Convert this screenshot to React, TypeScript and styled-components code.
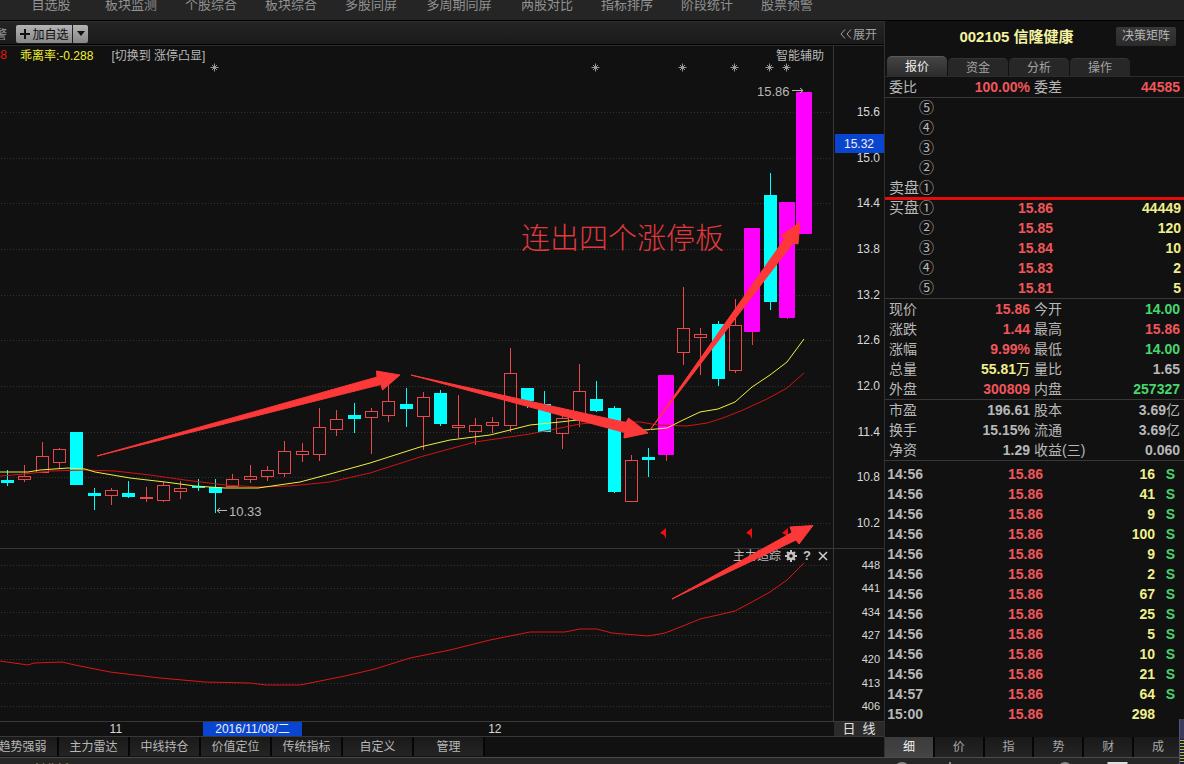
import React from "react";
import styled, { createGlobalStyle } from "styled-components";

const RED = "#f0565a";
const YELLOW = "#f0f08a";
const GREEN = "#46d66e";
const GREY = "#b8b8b8";
const LINE = "#383838";

const GlobalStyle = createGlobalStyle`
  *, *::before { box-sizing: border-box; }
  body {
    margin: 0;
    background: #111111;
    color: ${GREY};
    font-family: "Liberation Sans", "Noto Sans CJK SC", sans-serif;
    font-size: 12px;
  }
  button {
    font: inherit;
    color: inherit;
    margin: 0;
    padding: 0;
    border: 0;
    background: none;
    cursor: pointer;
  }
`;

const Page = styled.div`
  height: 100vh;
  overflow: hidden;
  display: flex;
  flex-direction: column;
`;

const TopNav = styled.nav`
  height: 21px;
  flex: none;
  overflow: hidden;
  display: flex;
  padding-left: 11px;
  background: #252525;
  border-bottom: 1px solid #000;
`;

const TopLink = styled.a<{ $wide?: boolean }>`
  flex: none;
  width: ${(p) => (p.$wide ? 96 : 80)}px;
  height: 20px;
  margin-top: -5px;
  line-height: 20px;
  text-align: center;
  font-size: 13px;
  color: #929292;
  text-decoration: none;
`;

const Main = styled.main`
  display: grid;
  grid-template-columns: minmax(0, 1fr) 300px;
  flex: none;
`;

const ChartColumn = styled.section`
  min-width: 0;
`;

const Toolbar = styled.div`
  height: 25px;
  display: flex;
  align-items: center;
  background: linear-gradient(#242424, #1a1a1a);
  border-top: 1px solid #303030;
  border-bottom: 1px solid #2b2b2b;
  box-shadow: inset 0 -1px 0 #000;
  overflow: hidden;
`;

const ClippedLabel = styled.span<{ $color?: string; $width: number }>`
  width: ${(p) => p.$width}px;
  flex: none;
  display: flex;
  justify-content: flex-end;
  overflow: hidden;
  white-space: nowrap;
  color: ${(p) => p.$color ?? "#999"};
`;

const AddGroup = styled.div`
  display: flex;
  gap: 1px;
  margin-left: 9px;
`;

const AddButton = styled.button`
  height: 18px;
  width: 56px;
  display: flex;
  align-items: center;
  justify-content: center;
  gap: 1px;
  color: #0c0c0c;
  background: linear-gradient(#b4b4b4, #868686);
  border-radius: 2px 0 0 2px;
  white-space: nowrap;
`;

const DropButton = styled(AddButton)`
  width: 15px;
  border-radius: 0 2px 2px 0;
`;

const ExpandButton = styled.button`
  margin-left: auto;
  margin-right: 7px;
  display: flex;
  align-items: center;
  gap: 1px;
  color: #a0a0a0;
`;

const AxisSplit = styled.div<{ $height: number; $topLine?: boolean }>`
  height: ${(p) => p.$height}px;
  display: grid;
  grid-template-columns: minmax(0, 1fr) 50px;
  ${(p) => p.$topLine && `border-top: 1px solid ${LINE};`}
`;

const ChartHeader = styled.header`
  display: flex;
  align-items: center;
  padding-bottom: 2px;
  border-right: 1px solid ${LINE};
`;

const Bias = styled.span`
  margin-left: 13px;
  color: #f2f230;
`;

const TextButton = styled.button<{ $end?: boolean }>`
  margin-left: ${(p) => (p.$end ? "auto" : "18px")};
  margin-right: ${(p) => (p.$end ? "9px" : "0")};
`;

const ChartStack = styled.div`
  position: relative;
`;

const Plot = styled.svg`
  display: block;
  width: 100%;
  height: auto;
  overflow: visible;
`;

const Overlay = styled.svg`
  position: absolute;
  inset: 0;
  width: 100%;
  height: auto;
  pointer-events: none;
`;

const IndicatorBar = styled.header`
  display: flex;
  align-items: center;
  justify-content: flex-end;
  gap: 4px;
  padding: 0 4px 2px 0;
  line-height: 14px;
  border-right: 1px solid ${LINE};
`;

const IconButton = styled.button`
  width: 12px;
  height: 14px;
  display: flex;
  align-items: center;
  justify-content: center;
  font-weight: bold;
  font-size: 13px;
  color: #c4c4c4;
`;

const TimeAxis = styled.div`
  height: 16px;
  display: grid;
  grid-template-columns: 203fr 99px 532fr 50px;
  align-items: stretch;
  line-height: 14px;
  border-top: 1px solid ${LINE};
  border-bottom: 1px solid ${LINE};
  color: #d8d8d8;
`;

const Month = styled.span<{ $share: number }>`
  padding-left: ${(p) => p.$share}%;
`;

const DateTag = styled.span`
  text-align: center;
  color: #eee;
  background: #0a45d0;
`;

const PeriodButton = styled.button`
  color: #e0e0e0;
  background: #2a2a2a;
  line-height: 14px;
  font-size: 13px;
  word-spacing: normal;
`;

const IndicatorTabs = styled.div`
  display: flex;
  height: 19px;
  margin-left: -12px;
`;

const IndicatorTab = styled.button`
  width: 71px;
  height: 19px;
  line-height: 18px;
  background: linear-gradient(#1a1a1a, #242424);
  border-right: 2px solid #060606;
`;

const ChartClip = styled.div`
  overflow: hidden;
`;

const Quote = styled.aside`
  border-left: 1px solid #303030;
  position: relative;
  display: flex;
  flex-direction: column;
`;

const QuoteHead = styled.header`
  height: 35px;
  display: flex;
  align-items: center;
  justify-content: flex-end;
  padding: 0 8px 4px 0;
`;

const StockName = styled.h1`
  flex: 1;
  margin: 0;
  padding-left: 32px;
  text-align: center;
  font-size: 15px;
  line-height: 20px;
  color: #f4f4a0;
`;

const MatrixButton = styled.button`
  width: 60px;
  height: 19px;
  line-height: 19px;
  border-radius: 2px;
  background: linear-gradient(#383838, #2a2a2a);
`;

const QuoteTabs = styled.div`
  display: flex;
  align-items: flex-end;
  gap: 1px;
  height: 21px;
  padding-left: 2px;
  border-bottom: 1px solid #2c2c2c;
`;

const QuoteTab = styled.button<{ $active?: boolean }>`
  width: 60px;
  height: ${(p) => (p.$active ? 20 : 18)}px;
  line-height: 18px;
  border-radius: 5px 5px 0 0;
  border-top: 1px solid ${(p) => (p.$active ? "#5a5a5a" : "#343434")};
  color: ${(p) => (p.$active ? "#f0f0f0" : "#a4a4a4")};
  background: ${(p) => (p.$active ? "linear-gradient(#444, #2c2c2c)" : "#272727")};
`;

const Table = styled.table<{ $underline?: boolean; $redTop?: boolean }>`
  position: relative;
  width: 100%;
  table-layout: fixed;
  border-collapse: separate;
  border-spacing: 0;
  font-size: 14px;
  ${(p) => p.$underline && `border-bottom: 1px solid ${LINE};`}
  ${(p) =>
    p.$redTop &&
    `&::before {
      content: "";
      position: absolute;
      left: 0;
      right: 0;
      top: -1px;
      height: 3px;
      background: #e60c0c;
    }`}
`;

const Label = styled.th`
  height: 20px;
  padding: 0 0 0 4px;
  line-height: 20px;
  text-align: left;
  font-weight: normal;
  white-space: nowrap;
`;

const LevelLabel = styled(Label)`
  padding: 0 1px 0 0;
  text-align: right;
  font-size: 15px;
`;

const Value = styled.td<{ $color?: string; $pad?: number }>`
  height: 20px;
  padding: 0 ${(p) => p.$pad ?? 0}px 0 0;
  line-height: 20px;
  text-align: right;
  font-weight: bold;
  white-space: nowrap;
  color: ${(p) => p.$color ?? GREY};
`;

const Unit = styled.span`
  font-weight: normal;
`;

const Ticks = styled.div`
  padding: 3px 0 13px;
`;

const DetailTabs = styled.div`
  display: grid;
  grid-template-columns: repeat(6, 1fr);
  height: 20px;
`;

const DetailTab = styled.button<{ $active?: boolean }>`
  line-height: 18px;
  color: ${(p) => (p.$active ? "#f0f0f0" : "#a8a8a8")};
  background: ${(p) => (p.$active ? "linear-gradient(#3c3c3c, #444)" : "linear-gradient(#1a1a1a, #242424)")};
  border-right: 2px solid #060606;
`;

const Meter = styled.div`
  position: absolute;
  right: 0;
  bottom: -8px;
  width: 5px;
  height: 46px;
  border-left: 1px solid #55557a;
  background: linear-gradient(#3a3a5c 20px, transparent 20px), repeating-linear-gradient(#b8c040 0 1px, #20203a 1px 3px);
`;

const Ticker = styled.footer`
  flex: none;
  display: flex;
  justify-content: space-between;
  height: 24px;
  padding-left: 33px;
  border-top: 1px solid #4a4a4a;
  background: #262626;
  color: #c0a860;
  line-height: 24px;
`;

const topItems = [
  "自选股", "板块监测", "个股综合", "板块综合", "多股同屏",
  "多周期同屏", "两股对比", "指标排序", "阶段统计", "股票预警",
];

const indicatorTabs = ["趋势强弱", "主力雷达", "中线持仓", "价值定位", "传统指标", "自定义", "管理"];

type Kind = "up" | "down" | "limit";
type Candle = [x: number, kind: Kind, top: number, bottom: number, high: number, low: number];

const candles: Candle[] = [
  [7, "down", 480, 483, 470, 486], [24, "up", 476, 480, 465, 482], [42, "up", 456, 473, 442, 473],
  [59, "up", 449, 463, 448, 469], [76, "down", 432, 485, 432, 485], [94, "down", 493, 496, 488, 510],
  [111, "up", 490, 496, 488, 505], [128, "down", 493, 497, 481, 498], [146, "up", 497, 499, 487, 502],
  [163, "up", 485, 501, 482, 502], [180, "up", 488, 492, 481, 499], [198, "down", 486, 488, 479, 491],
  [215, "down", 487, 493, 479, 513], [232, "up", 479, 487, 474, 487], [250, "up", 476, 480, 465, 483],
  [267, "up", 470, 477, 466, 481], [284, "up", 451, 474, 441, 477], [302, "up", 451, 455, 443, 462],
  [319, "up", 427, 455, 408, 461], [336, "up", 419, 430, 410, 436], [354, "down", 415, 419, 403, 433],
  [371, "up", 411, 418, 408, 454], [388, "up", 401, 416, 383, 422], [406, "down", 404, 409, 388, 427],
  [423, "up", 397, 417, 392, 450], [440, "down", 393, 424, 390, 426], [458, "up", 425, 428, 395, 438],
  [475, "up", 425, 432, 418, 445], [492, "up", 422, 426, 417, 433], [510, "up", 373, 426, 348, 432],
  [527, "down", 388, 401, 388, 408], [544, "down", 404, 432, 391, 432], [562, "up", 418, 434, 415, 449],
  [579, "up", 391, 420, 364, 427], [596, "down", 399, 411, 381, 412], [614, "down", 408, 492, 406, 493],
  [631, "up", 460, 502, 455, 502], [648, "down", 457, 460, 448, 477], [666, "limit", 375, 455, 375, 461],
  [683, "up", 328, 353, 287, 365], [700, "up", 334, 338, 328, 375], [718, "down", 324, 379, 321, 386],
  [735, "up", 325, 371, 299, 373], [752, "limit", 228, 332, 228, 345], [770, "down", 195, 302, 173, 310],
  [787, "limit", 202, 318, 202, 319], [804, "limit", 92, 234, 92, 234],
];

const priceAxis: [number, string][] = [
  [112, "15.6"], [158, "15.0"], [203, "14.4"], [249, "13.8"], [295, "13.2"],
  [340, "12.6"], [386, "12.0"], [432, "11.4"], [477, "10.8"], [523, "10.2"],
];

const trackAxis: [number, string][] = [
  [565, "448"], [588, "441"], [612, "434"], [635, "427"], [659, "420"], [683, "413"], [706, "406"],
];

const fastAverage =
  "0,472 28,472 40,470 68,468 85,469 95,472 130,478 165,482 195,486 225,488 258,488 272,486 300,482 330,474 370,463 420,447 450,440 490,435 510,430 530,425 560,422 577,420 600,424 625,429 645,430 667,428 683,420 700,412 718,409 735,402 752,387 770,375 787,362 804,339";
const slowAverage =
  "0,476 25,474 50,471 85,470 115,471 150,475 185,480 225,485 258,487 290,486 330,482 370,473 420,457 475,442 530,434 580,424 600,422 623,422 640,422 658,425 687,426 707,423 723,418 743,410 767,399 787,388 804,373";
const trackLine =
  "0,661 28,665 34,663 62,662 75,665 110,672 160,678 205,682 250,683 266,685 300,685 320,681 345,676 375,669 410,658 450,650 490,640 530,632 565,632 580,629 597,629 612,633 648,636 665,633 683,626 700,619 718,615 735,611 752,602 770,592 787,580 804,563";

const starXs = [214, 595, 682, 734, 769, 786];

function CandleShape({ candle: [x, kind, top, bottom, high, low] }: { candle: Candle }) {
  const c = x + 0.5;
  if (kind === "limit") {
    return (
      <g>
        <path d={`M${c} ${bottom}V${low}`} stroke="#ff3030" />
        <rect x={x - 8} y={top} width={16} height={bottom - top} rx={1} fill="#ff00ff" />
      </g>
    );
  }
  if (kind === "down") {
    return (
      <g>
        <path d={`M${c} ${high}V${low}`} stroke="#00ffff" />
        <rect x={x - 6} y={top} width={13} height={bottom - top} fill="#00ffff" />
      </g>
    );
  }
  return (
    <g fill="none" stroke="#e8484c">
      <path d={`M${c} ${high}V${top}M${c} ${bottom}V${low}`} />
      <rect x={x - 5.5} y={top + 0.5} width={12} height={Math.max(1, bottom - top - 1)} />
    </g>
  );
}

function Scale({ ticks, size }: { ticks: [number, string][]; size: number }) {
  return (
    <>
      {ticks.map(([y, text]) => (
        <g key={text}>
          <path d={`M1 ${y + 0.5}H832`} stroke="#333" strokeDasharray="1 2" />
          <text x={880} y={y + 4} textAnchor="end" fontSize={size} fill="#d8d8d8">
            {text}
          </text>
        </g>
      ))}
    </>
  );
}

function PricePlot() {
  return (
    <Plot viewBox="0 64 884 484" role="img" aria-label="日线">
      <Scale ticks={priceAxis} size={12} />
      <path d="M833.5 64V548" stroke={LINE} />
      {candles.map((c) => (
        <CandleShape key={c[0]} candle={c} />
      ))}
      <polyline points={slowAverage} fill="none" stroke="#d01414" />
      <polyline points={fastAverage} fill="none" stroke="#f0f040" />
      {starXs.map((x) => (
        <path
          key={x}
          d={`M${x + 0.5} 63.5v8M${x - 3.5} 67.5h8M${x - 2} 65l5 5M${x + 3} 65l-5 5`}
          stroke="#999"
        />
      ))}
      <g fill="#f01010">
        <path d="M660 533L666 528V539L664 535Z" />
        <path d="M746 533L752 528V539L750 535Z" />
        <path d="M782 533L788 528V539L786 535Z" />
      </g>
      <g fill="none" stroke="#b8b8b8">
        <path d="M227 510.5H217M220 508L217 510.5L220 513" />
        <path d="M792 90.5H803M800 88L803 90.5L800 93" />
      </g>
      <g fill="#b8b8b8" fontSize={13}>
        <text x={229} y={516}>10.33</text>
        <text x={757} y={96}>15.86</text>
      </g>
      <rect x={835} y={134} width={49} height={19} fill="#0a45d0" />
      <text x={874} y={148} textAnchor="end" fontSize={12} fill="#f0f0f0">15.32</text>
    </Plot>
  );
}

function Annotations() {
  return (
    <Overlay viewBox="0 64 884 657">
      <g fill="#fc3838" stroke="#fc3838" strokeLinejoin="round">
        <path d="M97 456L377 377L376.500 371L400 375L382.500 390L381 384.500Z" />
        <path d="M411 375L626 422.500L628.500 418L648 433L624 438L624.500 432.500Z" />
        <path d="M650 430L784.500 239L781 236L800 222L798 244L793 243Z" />
        <path d="M672 599L792 532.500L790 527L813 525.500L799 544L796 540Z" />
      </g>
      <text x={521} y={249} fontSize={29} fontWeight={300} fill="#e0383c">连出四个涨停板</text>
    </Overlay>
  );
}

type Stat = [string, string, string?, string?];

const summary: [Stat, Stat][] = [[["委比", "100.00%", RED], ["委差", "44585", RED]]];

const dayStats: [Stat, Stat][] = [
  [["现价", "15.86", RED], ["今开", "14.00", GREEN]],
  [["涨跌", "1.44", RED], ["最高", "15.86", RED]],
  [["涨幅", "9.99%", RED], ["最低", "14.00", GREEN]],
  [["总量", "55.81", YELLOW, "万"], ["量比", "1.65"]],
  [["外盘", "300809", RED], ["内盘", "257327", GREEN]],
];

const valueStats: [Stat, Stat][] = [
  [["市盈", "196.61"], ["股本", "3.69", GREY, "亿"]],
  [["换手", "15.15%"], ["流通", "3.69", GREY, "亿"]],
  [["净资", "1.29"], ["收益(三)", "0.060"]],
];

function StatTable({ rows }: { rows: [Stat, Stat][] }) {
  return (
    <Table $underline>
      <colgroup>
        <col width="50" />
        <col width="95" />
        <col width="60" />
        <col />
      </colgroup>
      <tbody>
        {rows.map((row) => (
          <tr key={row[0][0]}>
            {row.map(([label, value, color, unit], i) => (
              <React.Fragment key={label}>
                <Label scope="row">{label}</Label>
                <Value $color={color} $pad={i === 0 ? 0 : 4}>
                  {value}
                  {unit && <Unit>{unit}</Unit>}
                </Value>
              </React.Fragment>
            ))}
          </tr>
        ))}
      </tbody>
    </Table>
  );
}

type Level = [string, string?, string?];

const asks: Level[] = [["⑤"], ["④"], ["③"], ["②"], ["卖盘①"]];
const bids: Level[] = [
  ["买盘①", "15.86", "44449"], ["②", "15.85", "120"], ["③", "15.84", "10"],
  ["④", "15.83", "2"], ["⑤", "15.81", "5"],
];

function LevelTable({ rows, bid }: { rows: Level[]; bid?: boolean }) {
  return (
    <Table $redTop={bid} $underline={bid}>
      <colgroup>
        <col width="50" />
        <col width="118" />
        <col />
      </colgroup>
      <tbody>
        {rows.map(([label, price, volume]) => (
          <tr key={label}>
            <LevelLabel scope="row">{label}</LevelLabel>
            <Value $color={RED}>{price}</Value>
            <Value $color={YELLOW} $pad={3}>{volume}</Value>
          </tr>
        ))}
      </tbody>
    </Table>
  );
}

const trades: [string, string, string][] = [
  ["14:56", "16", "S"], ["14:56", "41", "S"], ["14:56", "9", "S"], ["14:56", "100", "S"],
  ["14:56", "9", "S"], ["14:56", "2", "S"], ["14:56", "67", "S"], ["14:56", "25", "S"],
  ["14:56", "5", "S"], ["14:56", "10", "S"], ["14:56", "21", "S"], ["14:57", "64", "S"],
  ["15:00", "298", ""],
];

function TradeTable() {
  return (
    <Table>
      <colgroup>
        <col width="38" />
        <col width="120" />
        <col width="112" />
        <col />
      </colgroup>
      <tbody>
        {trades.map(([time, volume, side], i) => (
          <tr key={i}>
            <Value>{time}</Value>
            <Value $color={RED}>15.86</Value>
            <Value $color={YELLOW}>{volume}</Value>
            <Value $color={GREEN} $pad={9}>{side}</Value>
          </tr>
        ))}
      </tbody>
    </Table>
  );
}

export default function App() {
  return (
    <Page>
      <GlobalStyle />
      <TopNav>
        {topItems.map((t) => (
          <TopLink key={t} href="#" $wide={t.length > 4}>{t}</TopLink>
        ))}
      </TopNav>
      <Main>
        <ChartColumn>
          <Toolbar>
            <ClippedLabel $width={7}>警</ClippedLabel>
            <AddGroup>
              <AddButton>
                <svg width="12" height="12" viewBox="0 0 12 12" aria-hidden="true">
                  <path d="M6 1V11M1 6H11" stroke="#111" strokeWidth="2" />
                </svg>
                加自选
              </AddButton>
              <DropButton aria-label="更多">
                <svg width="8" height="5" viewBox="0 0 8 5" aria-hidden="true">
                  <path d="M0 0H8L4 5Z" fill="#111" />
                </svg>
              </DropButton>
            </AddGroup>
            <ExpandButton>
              <svg width="12" height="10" viewBox="0 0 12 10" aria-hidden="true">
                <path d="M5 0.500L1 5L5 9.500M11 0.500L7 5L11 9.500" fill="none" stroke="#a0a0a0" />
              </svg>
              展开
            </ExpandButton>
          </Toolbar>
          <AxisSplit $height={18}>
            <ChartHeader>
              <ClippedLabel $width={7} $color="#e01818">88</ClippedLabel>
              <Bias>乖离率:-0.288</Bias>
              <TextButton>[切换到 涨停凸显]</TextButton>
              <TextButton $end>智能辅助</TextButton>
            </ChartHeader>
          </AxisSplit>
          <ChartStack>
            <PricePlot />
            <AxisSplit $height={15} $topLine>
              <IndicatorBar>
                <span>主力追踪</span>
                <IconButton aria-label="设置">
                  <svg width="12" height="12" viewBox="0 0 12 12" aria-hidden="true">
                    <path d="M6 0V12M0 6H12M2 2L10 10M10 2L2 10" stroke="#c4c4c4" strokeWidth="2" />
                    <circle cx="6" cy="6" r="3" fill="#111" stroke="#c4c4c4" strokeWidth="2.500" />
                  </svg>
                </IconButton>
                <IconButton aria-label="帮助">?</IconButton>
                <IconButton aria-label="关闭">
                  <svg width="10" height="10" viewBox="0 0 10 10" aria-hidden="true">
                    <path d="M1 1L9 9M9 1L1 9" stroke="#d0d0d0" strokeWidth="1.500" />
                  </svg>
                </IconButton>
              </IndicatorBar>
            </AxisSplit>
            <Plot viewBox="0 563 884 158" role="img" aria-label="主力追踪">
              <Scale ticks={trackAxis} size={11} />
              <path d="M833.5 563V721" stroke={LINE} />
              <polyline points={trackLine} fill="none" stroke="#e01414" />
            </Plot>
            <Annotations />
          </ChartStack>
          <TimeAxis>
            <Month $share={54}>11</Month>
            <DateTag>2016/11/08/二</DateTag>
            <Month $share={35}>12</Month>
            <PeriodButton>日&nbsp; 线</PeriodButton>
          </TimeAxis>
          <ChartClip>
            <IndicatorTabs>
              {indicatorTabs.map((t) => (
                <IndicatorTab key={t}>{t}</IndicatorTab>
              ))}
            </IndicatorTabs>
          </ChartClip>
        </ChartColumn>
        <Quote>
          <QuoteHead>
            <StockName>002105 信隆健康</StockName>
            <MatrixButton>决策矩阵</MatrixButton>
          </QuoteHead>
          <QuoteTabs>
            <QuoteTab $active>报价</QuoteTab>
            <QuoteTab>资金</QuoteTab>
            <QuoteTab>分析</QuoteTab>
            <QuoteTab>操作</QuoteTab>
          </QuoteTabs>
          <StatTable rows={summary} />
          <LevelTable rows={asks} />
          <LevelTable rows={bids} bid />
          <StatTable rows={dayStats} />
          <StatTable rows={valueStats} />
          <Ticks>
            <TradeTable />
          </Ticks>
          <DetailTabs>
            {["细", "价", "指", "势", "财", "成"].map((t, i) => (
              <DetailTab key={t} $active={i === 0}>{t}</DetailTab>
            ))}
          </DetailTabs>
          <Meter />
        </Quote>
      </Main>
      <Ticker>
        <span>创业板</span>
        <svg width="300" height="23" viewBox="884 758 300 23" fill="none" stroke="#8c8c8c" strokeWidth="2" aria-hidden="true">
          <circle cx="902" cy="770" r="7" />
          <path d="M950 762V776" />
          <circle cx="1065" cy="769" r="6" />
          <path d="M1108.500 776V763H1126.500V776Z" stroke="#e0e0e0" />
        </svg>
      </Ticker>
    </Page>
  );
}
